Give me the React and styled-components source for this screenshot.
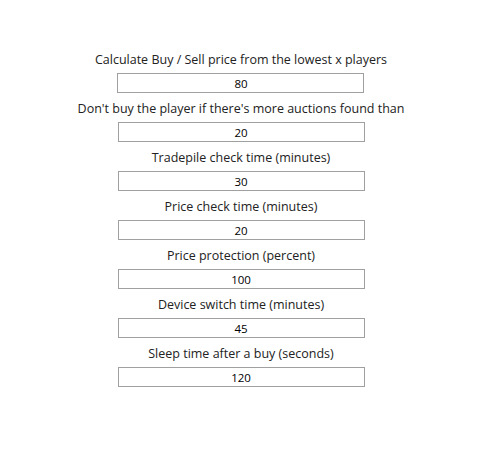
import React from 'react';
import styled, { createGlobalStyle } from 'styled-components';

const GlobalStyle = createGlobalStyle`
  body {
    margin: 0;
    background: #ffffff;
    font-family: "Open Sans", "Noto Sans", sans-serif;
  }
`;

const Page = styled.div`
  width: 482px;
  padding-top: 50px;
  display: flex;
  flex-direction: column;
  align-items: center;
`;

const Field = styled.div`
  display: flex;
  flex-direction: column;
  align-items: center;
  margin-bottom: 6px;
`;

const Label = styled.label`
  font-size: 12.5px;
  line-height: 20px;
  color: #222;
  white-space: nowrap;
  margin-bottom: 3px;
`;

const Input = styled.input`
  box-sizing: border-box;
  width: 247px;
  height: 20px;
  border: 1px solid #a0a0a0;
  padding: 0;
  margin: 0;
  text-align: center;
  font-family: "Open Sans", "Noto Sans", sans-serif;
  font-size: 11.5px;
  color: #000;
  background: #fff;
  outline: none;
`;

const settings = [
  { label: 'Calculate Buy / Sell price from the lowest x players', value: '80' },
  { label: "Don't buy the player if there's more auctions found than", value: '20' },
  { label: 'Tradepile check time (minutes)', value: '30' },
  { label: 'Price check time (minutes)', value: '20' },
  { label: 'Price protection (percent)', value: '100' },
  { label: 'Device switch time (minutes)', value: '45' },
  { label: 'Sleep time after a buy (seconds)', value: '120' },
];

const App = () => {
  return (
    <>
      <GlobalStyle />
      <Page>
        {settings.map(s => (
          <Field key={s.label}>
            <Label>{s.label}</Label>
            <Input type="text" defaultValue={s.value} />
          </Field>
        ))}
      </Page>
    </>
  );
};

export default App;
